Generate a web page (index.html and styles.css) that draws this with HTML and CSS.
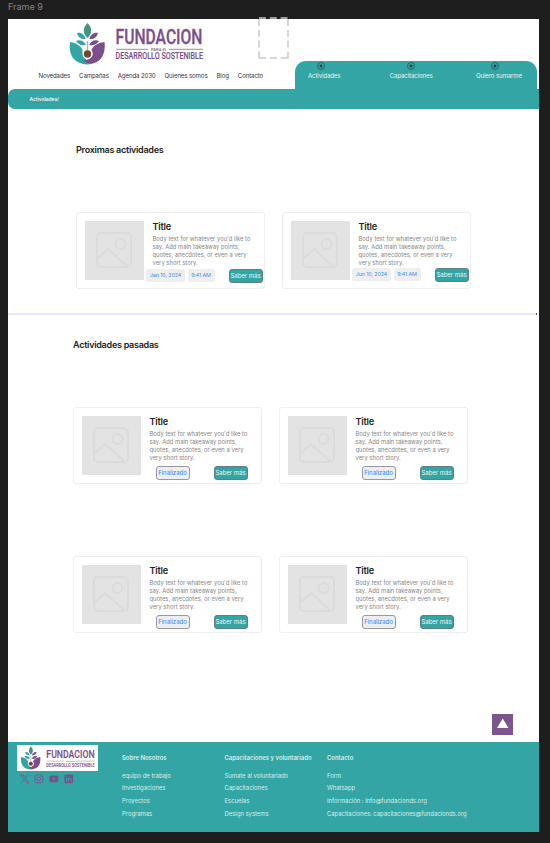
FILE: index.html
```html
<!DOCTYPE html>
<html lang="es">
<head>
<meta charset="utf-8">
<title>Fundacion para el desarrollo sostenible</title>
<link rel="stylesheet" href="styles.css">
</head>
<body>
<svg class="defs" width="0" height="0" aria-hidden="true">
  <symbol id="mark" viewBox="0 0 40 44">
    <path fill="#34a5a5" d="M2 20C8 21 13 23.500 14.500 28C14 34 18 39 25 41.500C17 44 9 41 5 36C1.500 31 1.500 25 2 20Z"/>
    <path fill="#7a4f8b" d="M36.500 20C30 21 25 23.500 23.500 28C26.500 33 23 38 15.500 38.500C19 42.500 28 43 33 36.500C37 31 37 25 36.500 20Z"/>
    <path fill="#459480" d="M19.500 1C14.500 6 14.500 11 19.500 16C24.500 11 24.500 6 19.500 1Z"/>
    <path fill="#34a5a5" d="M9 11C13 10 17 13 17.500 17C13 17.500 10 15 9 11ZM8 19C12 17 16 19 18 23C13 24 10 22 8 19Z"/>
    <path fill="#7a4f8b" d="M30 11C26 10 22 13 21.500 17C26 17.500 29 15 30 11ZM31 19C27 17 23 19 21 23C26 24 29 22 31 19Z"/>
    <circle cx="19.500" cy="32" r="5" fill="#fff"/>
    <path d="M19.500 18V32" stroke="#fff" stroke-width="3.600"/>
    <path d="M19.500 19V30" stroke="#c2ad9c" stroke-width="1.400"/>
    <circle cx="19.500" cy="32" r="3.700" fill="#704936"/>
  </symbol>
  <symbol id="picture" viewBox="0 0 36 36">
    <g fill="none" stroke="#dbdbdb" stroke-width="2">
      <rect x="1" y="1" width="34" height="34" rx="4"/>
      <circle cx="24.500" cy="12" r="5"/>
      <path d="M2 26L12 17L31 34"/>
    </g>
  </symbol>
  <symbol id="star" viewBox="0 0 8 8">
    <circle cx="4" cy="4" r="3.500" fill="none" stroke="#2b5758" stroke-width=".8"/>
    <path fill="#263c3d" d="M4 1.700L4.650 3.150L6.200 3.300L5 4.350L5.400 5.900L4 5.050L2.600 5.900L3 4.350L1.800 3.300L3.350 3.150Z"/>
  </symbol>
</svg>

<p class="frame-label">Frame 9</p>
<div class="frame">
  <header class="header">
    <div class="main-side">
      <svg class="logo" viewBox="0 0 137 44">
        <use href="#mark" width="40" height="44"/>
        <text class="logo-name" x="47.500" y="22" textLength="87" lengthAdjust="spacingAndGlyphs">FUNDACION</text>
        <path d="M48 27.300H80M101 27.300H135" stroke="#77717a" stroke-width=".8"/>
        <text class="logo-mid" x="83" y="28.800" textLength="16" lengthAdjust="spacingAndGlyphs">PARA EL</text>
        <text class="logo-sub" x="47.500" y="37.300" textLength="87.500" lengthAdjust="spacingAndGlyphs">DESARROLLO SOSTENIBLE</text>
      </svg>
      <nav class="nav">
        <a>Novedades</a><a>Campañas</a><a>Agenda 2030</a><a>Quienes somos</a><a>Blog</a><a>Contacto</a>
      </nav>
    </div>
    <svg class="placeholder" viewBox="0 0 32 43"><path d="M1 2V42M30 2V42M1 1H31M1 41H31" fill="none" stroke="#c9c9c9" stroke-width="1.500" stroke-dasharray="7 3.800"/></svg>
    <nav class="tabs">
      <a><svg><use href="#star"/></svg><span>Actividades</span></a>
      <a><svg><use href="#star"/></svg><span>Capacitaciones</span></a>
      <a><svg><use href="#star"/></svg><span>Quiero sumarme</span></a>
    </nav>
  </header>
  <div class="crumbs">Actividades/</div>

  <section class="upcoming">
    <h2>Proximas actividades</h2>
    <div class="cards">
      <article class="card">
        <div class="thumb"><svg><use href="#picture"/></svg></div>
        <div class="info">
          <h3>Title</h3>
          <p>Body text for whatever you'd like to<br>say. Add main takeaway points,<br>quotes, anecdotes, or even a very<br>very short story.</p>
          <div class="actions"><span class="chip date">Jan 10, 2024</span><span class="chip time">9:41 AM</span><a class="btn">Saber más</a></div>
        </div>
      </article>
      <article class="card raised">
        <div class="thumb"><svg><use href="#picture"/></svg></div>
        <div class="info">
          <h3>Title</h3>
          <p>Body text for whatever you'd like to<br>say. Add main takeaway points,<br>quotes, anecdotes, or even a very<br>very short story.</p>
          <div class="actions"><span class="chip date">Jun 10, 2024</span><span class="chip time">9:41 AM</span><a class="btn">Saber más</a></div>
        </div>
      </article>
    </div>
  </section>
  <div class="divider"></div>

  <section class="past">
    <h2>Actividades pasadas</h2>
    <div class="cards">
      <article class="card">
        <div class="thumb"><svg><use href="#picture"/></svg></div>
        <div class="info">
          <h3>Title</h3>
          <p>Body text for whatever you'd like to<br>say. Add main takeaway points,<br>quotes, anecdotes, or even a very<br>very short story.</p>
          <div class="actions"><span class="btn done">Finalizado</span><a class="btn">Saber más</a></div>
        </div>
      </article>
      <article class="card">
        <div class="thumb"><svg><use href="#picture"/></svg></div>
        <div class="info">
          <h3>Title</h3>
          <p>Body text for whatever you'd like to<br>say. Add main takeaway points,<br>quotes, anecdotes, or even a very<br>very short story.</p>
          <div class="actions"><span class="btn done">Finalizado</span><a class="btn">Saber más</a></div>
        </div>
      </article>
      <article class="card">
        <div class="thumb"><svg><use href="#picture"/></svg></div>
        <div class="info">
          <h3>Title</h3>
          <p>Body text for whatever you'd like to<br>say. Add main takeaway points,<br>quotes, anecdotes, or even a very<br>very short story.</p>
          <div class="actions"><span class="btn done">Finalizado</span><a class="btn">Saber más</a></div>
        </div>
      </article>
      <article class="card">
        <div class="thumb"><svg><use href="#picture"/></svg></div>
        <div class="info">
          <h3>Title</h3>
          <p>Body text for whatever you'd like to<br>say. Add main takeaway points,<br>quotes, anecdotes, or even a very<br>very short story.</p>
          <div class="actions"><span class="btn done">Finalizado</span><a class="btn">Saber más</a></div>
        </div>
      </article>
    </div>
    <a class="to-top"><svg viewBox="0 0 21 21"><path d="M10.700 4.500L16.500 14H5Z" fill="#fff"/></svg></a>
  </section>

  <footer class="footer">
    <div class="brand">
      <div class="brand-box">
        <svg viewBox="0 0 137 44">
          <use href="#mark" width="40" height="44"/>
          <text class="logo-name" x="47.500" y="22" textLength="87" lengthAdjust="spacingAndGlyphs">FUNDACION</text>
          <path d="M48 27.300H80M101 27.300H135" stroke="#77717a" stroke-width=".8"/>
          <text class="logo-mid" x="83" y="28.800" textLength="16" lengthAdjust="spacingAndGlyphs">PARA EL</text>
          <text class="logo-sub" x="47.500" y="37.300" textLength="87.500" lengthAdjust="spacingAndGlyphs">DESARROLLO SOSTENIBLE</text>
        </svg>
      </div>
      <div class="social">
        <svg viewBox="0 0 10 10"><path d="M.8 .8H3L9.200 9.200H7ZM9 .7L5.600 4.500M4.300 5.800L1 9.400" fill="none" stroke="#7a5891" stroke-width=".9"/></svg>
        <svg viewBox="0 0 10 10"><g fill="none" stroke="#7a5891"><rect x=".9" y=".9" width="8.200" height="8.200" rx="2.300"/><circle cx="5" cy="5" r="2"/></g><circle cx="7.400" cy="2.600" r=".6" fill="#7a5891"/></svg>
        <svg viewBox="0 0 10 10"><rect x=".4" y="1.600" width="9.200" height="6.900" rx="1.700" fill="#7a4f8b"/><path d="M4 3.500L6.700 5L4 6.500Z" fill="#34a5a5"/></svg>
        <svg viewBox="0 0 10 10"><rect x=".4" y=".4" width="9.200" height="9.200" rx="1.200" fill="#7a4f8b"/><path d="M2.500 4V8M4.500 8V4M4.500 6C4.500 4.200 7.400 4 7.400 5.800V8M2.500 2V3" fill="none" stroke="#34a5a5"/></svg>
      </div>
    </div>
    <div class="links"><h4>Sobre Nosotros</h4><a>equipo de trabajo</a><a>Investigaciones</a><a>Proyectos</a><a>Programas</a></div>
    <div class="links"><h4>Capacitaciones y voluntariado</h4><a>Sumate al voluntariado</a><a>Capacitaciones</a><a>Escuelas</a><a>Design systems</a></div>
    <div class="links"><h4>Contacto</h4><a>Form</a><a>Whatsapp</a><a>Información : info@fundacionds.org</a><a>Capacitaciones: capacitaciones@fundacionds.org</a></div>
  </footer>
</div>
</body>
</html>
```
FILE: styles.css
```css
* { box-sizing: border-box; }
body { margin: 0; height: 843px; overflow: hidden; background: #1e1e1e; font-family: Inter, "Liberation Sans", sans-serif; color: #222; }
h2, h3, h4, p { margin: 0; }
a, span, h2, h3, h4, p { white-space: nowrap; }
svg { display: block; }
.defs { position: absolute; }
.frame-label { height: 19px; padding-left: 8px; font-size: 9px; line-height: 14px; color: #858585; }
.frame { width: 531px; height: 813px; margin-left: 8px; background: #fff; display: flex; flex-direction: column; }

.logo, .brand-box svg { overflow: visible; }
.logo-name { font: 500 19.500px Roboto, sans-serif; fill: #7a4f8b; stroke: #7a4f8b; stroke-width: .3px; }
.logo-mid { font: 500 3.800px Roboto, sans-serif; fill: #666; }
.logo-sub { font: 500 8.200px Roboto, sans-serif; fill: #7a4f8b; stroke: #7a4f8b; stroke-width: .1px; }

.header { height: 70px; display: flex; }
.main-side { width: 250px; padding-top: 3px; }
.logo { width: 137px; height: 44px; margin-left: 60px; }
.nav { display: flex; margin: 5px 0 0 30.500px; gap: 9px; font-size: 6.100px; letter-spacing: -.12px; line-height: 10px; color: #333; }
.placeholder { width: 32px; height: 43px; margin-top: -2px; }
.tabs { width: 242px; height: 28px; margin: 42px 0 0 4.500px; padding: 1px 14.500px 0 13.500px; display: flex; justify-content: space-between; background: #34a5a5; border-radius: 11px 11px 0 0; color: #e5f5f5; font-size: 6.100px; letter-spacing: -.12px; line-height: 12px; }
.tabs a { display: flex; flex-direction: column; }
.tabs svg { width: 8px; height: 8px; margin: 0 auto; }
.tabs a:first-child svg { margin-left: 9px; }
.tabs a:nth-child(2) { margin-left: 6px; }
.tabs a:last-child svg { margin-left: 15.500px; }
.crumbs { height: 20px; padding-left: 21.500px; background: #34a5a5; border-radius: 7px 0 0 7px; color: #fff; font-size: 5px; letter-spacing: -.05px; line-height: 20px; font-weight: 500; }

.upcoming { height: 204px; padding: 34.500px 0 0 68px; }
.divider { height: 2px; background: linear-gradient(90deg, #ece4fd calc(100% - 3px), #55505f calc(100% - 3px), #55505f calc(100% - 2px), #fff calc(100% - 2px)); }
.past { height: 426.500px; padding: 24px 0 0 65px; display: flex; flex-direction: column; }
h2 { font-size: 9px; line-height: 12px; font-weight: 600; letter-spacing: -.26px; }
.cards { display: grid; grid-template-columns: 189px 189px; column-gap: 17px; row-gap: 72px; }
.upcoming .cards { margin-top: 56.500px; }
.past .cards { margin-top: 56px; }
.card { height: 77px; padding: 8px; border: 1px solid #efefef; border-radius: 3px; display: flex; }
.thumb { flex: none; width: 59px; height: 59px; padding: 11px; background: #e3e3e3; }
.thumb svg { width: 36px; height: 36px; }
.info { flex: 1; min-width: 0; padding-left: 8.500px; display: flex; flex-direction: column; }
h3 { font-size: 9.200px; line-height: 11px; font-weight: 600; letter-spacing: -.25px; }
.info p { margin-top: 2.700px; font-size: 5.800px; letter-spacing: .03px; line-height: 8.100px; color: #858585; }
.actions { display: flex; align-items: center; margin: 1.800px 0 0 -6.500px; height: 14px; }
.raised .actions { margin-top: .8px; }
.chip { flex: none; height: 13px; border-radius: 2.500px; background: #eee; color: #3d92f4; font-size: 5.400px; letter-spacing: -.12px; line-height: 13px; text-align: center; }
.date { width: 39px; }
.time { width: 27px; margin-left: 2.500px; }
.btn { flex: none; width: 34px; height: 14px; border: 1px solid #5f7f80; border-radius: 3px; background: #34a5a5; color: #e7f6f6; font-size: 6.100px; letter-spacing: -.05px; line-height: 12px; display: flex; justify-content: center; }
.time + .btn { margin-left: 14px; }
.done { margin-left: 6px; background: #eee; border-color: #999; color: #2d8bff; }
.past .actions { margin: 3.800px 0 0; }
.done + .btn { margin-left: 24px; }
.to-top { width: 21px; height: 21px; margin: 81px 0 0 418.500px; background: #7d558e; }

.footer { height: 90.500px; padding: 3px 0 0 9px; background: #34a5a5; display: flex; color: #d6eeee; }
.brand { width: 105px; }
.brand-box { width: 81px; height: 26px; padding: 1px 0 0 3px; background: #fff; }
.brand-box svg { width: 76px; height: 24.400px; }
.social { display: flex; gap: 5px; margin: 3.500px 0 0 2.500px; }
.social svg { width: 9.700px; height: 9.700px; }
.links { width: 102.500px; padding-top: 7px; display: flex; flex-direction: column; font-size: 5.900px; }
h4 { margin-bottom: 6.300px; font-size: 5.950px; line-height: 12px; font-weight: 600; }
.links a { line-height: 12.600px; }
```
